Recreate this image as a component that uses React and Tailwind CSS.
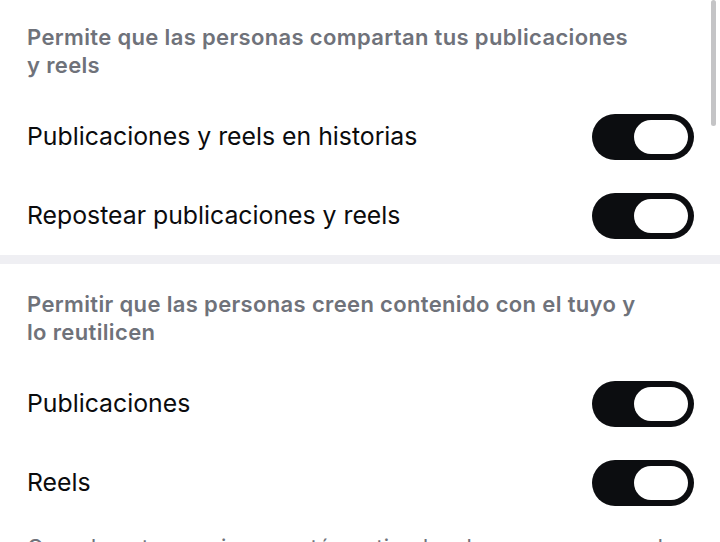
import React from "react";

const sections = [
  {
    title: ["Permite que las personas compartan tus publicaciones", "y reels"],
    items: ["Publicaciones y reels en historias", "Repostear publicaciones y reels"],
  },
  {
    title: ["Permitir que las personas creen contenido con el tuyo y", "lo reutilicen"],
    items: ["Publicaciones", "Reels"],
  },
];

const Toggle = ({ on = true }) => (
  <div
    className={`flex h-[46px] w-[102px] shrink-0 items-center rounded-full px-[6px] ${
      on ? "justify-end bg-[#0c0d10]" : "justify-start bg-[#e4e4e7]"
    }`}
  >
    <div className="h-[34px] w-[54px] rounded-full bg-white" />
  </div>
);

const Section = ({ title, items, first }) => (
  <section className={first ? "pt-[23px]" : "pt-[26px]"}>
    <h2 className="px-[27px] text-[22px] font-semibold leading-[28px] tracking-[0.35px] text-[#6f727a]">
      {title.map((line) => (
        <span key={line} className="block whitespace-nowrap">
          {line}
        </span>
      ))}
    </h2>
    <div className="mt-[18px]">
      {items.map((label) => (
        <div key={label} className="flex h-[79px] items-center justify-between pl-[27px] pr-[26px]">
          <span className="text-[24.8px] leading-none text-[#0b0b0d]">{label}</span>
          <Toggle />
        </div>
      ))}
    </div>
  </section>
);

export default function App() {
  return (
    <div
      className="relative h-[542px] w-[720px] overflow-hidden bg-white"
      style={{ fontFamily: "Inter, 'Noto Sans', sans-serif" }}
    >
      {/* scroll indicator */}
      <div className="absolute right-[4px] top-0 h-[126px] w-[5px] rounded-full bg-[#c4c4c6]" />

      <Section {...sections[0]} first />
      <div className="h-[9px] bg-[#efeff3]" />
      <Section {...sections[1]} />

      <p className="whitespace-nowrap px-[27px] pt-[11px] text-[22px] leading-[28px] tracking-[0.35px] text-[#6f727a]">
        Cuando estas opciones están activadas, las personas pueden usar tus publicaciones
      </p>
    </div>
  );
}
